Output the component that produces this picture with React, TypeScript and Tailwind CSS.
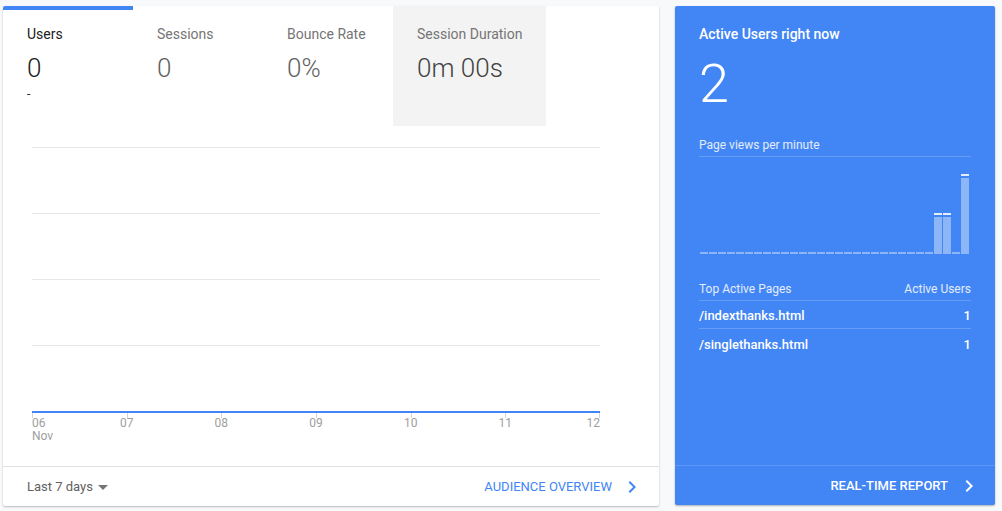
import React from "react";

const tabs = [
  { label: "Users", value: "0", sub: "-", active: true },
  { label: "Sessions", value: "0" },
  { label: "Bounce Rate", value: "0%" },
  { label: "Session Duration", value: "0m 00s", hover: true },
];

const days = ["06", "07", "08", "09", "10", "11", "12"];

// page views per minute, last 30 minutes
const pageViews = [
  0, 0, 0, 0, 0, 0, 0, 0, 0, 0, 0, 0, 0, 0, 0, 0, 0, 0, 0, 0, 0, 0, 0, 0, 0, 0, 1, 1, 0, 2,
];

const activePages = [
  { path: "/indexthanks.html", users: 1 },
  { path: "/singlethanks.html", users: 1 },
];

function ChevronRight({ className }: { className?: string }) {
  return (
    <svg viewBox="0 0 24 24" width="24" height="24" className={className} fill="currentColor">
      <path d="M10 6L8.59 7.41 13.17 12l-4.58 4.59L10 18l6-6z" />
    </svg>
  );
}

function CaretDown() {
  return (
    <svg viewBox="0 0 24 24" width="24" height="24" className="text-[#757575]" fill="currentColor">
      <path d="M7 10l5 5 5-5z" />
    </svg>
  );
}

function OverviewCard() {
  return (
    <div className="w-[656px] h-[500px] bg-white rounded-[2px] shadow-[0_1px_2px_rgba(0,0,0,0.25)] flex flex-col">
      <div className="flex h-[120px] shrink-0">
        {tabs.map((t) => (
          <div
            key={t.label}
            className={`relative min-w-[130px] px-6 pt-[18px] ${t.hover ? "bg-[#f3f3f3]" : ""}`}
          >
            {t.active && <div className="absolute top-0 left-0 right-0 h-1 bg-[#4285f4] rounded-tl-[2px]" />}
            <div className={`text-sm leading-5 whitespace-nowrap ${t.active ? "text-[#212121]" : "text-[#757575]"}`}>
              {t.label}
            </div>
            <div
              className={`mt-[11px] text-[26px] font-light leading-none whitespace-nowrap ${
                t.active ? "text-[#212121]" : t.hover ? "text-[#424242]" : "text-[#616161]"
              }`}
            >
              {t.value}
            </div>
            {t.sub && <div className="mt-[5px] text-xs leading-4 text-[#212121]">{t.sub}</div>}
          </div>
        ))}
      </div>

      <div className="flex-1 px-[29px] pt-[21px]">
        <div className="w-[568px]">
          {[0, 1, 2, 3].map((i) => (
            <div key={i} className="h-[66px] border-t border-[#e6e6e6]" />
          ))}
          <div className="h-[2px] bg-[#4285f4]" />
          <div className="relative h-[40px] text-xs leading-[13px] text-[#9e9e9e]">
            {days.map((d, i) => {
              const x = (568 / 6) * i;
              const align = i === 0 ? "" : i === 6 ? "-translate-x-full" : "-translate-x-1/2";
              return (
                <React.Fragment key={d}>
                  <div className="absolute top-0 w-px h-[5px] bg-[#d6d6d6]" style={{ left: i === 6 ? x - 1 : x }} />
                  <div className={`absolute top-[4px] ${align}`} style={{ left: x }}>
                    <div>{d}</div>
                    {i === 0 && <div>Nov</div>}
                  </div>
                </React.Fragment>
              );
            })}
          </div>
        </div>
      </div>

      <div className="h-[40px] shrink-0 border-t border-[#e0e0e0] flex items-center justify-between pl-6 pr-[15px]">
        <div className="flex items-center text-[13px] text-[#616161]">
          Last 7 days
          <span className="ml-[-2px]">
            <CaretDown />
          </span>
        </div>
        <div className="flex items-center text-[13px] text-[#4285f4]">
          AUDIENCE OVERVIEW
          <ChevronRight className="ml-[8px]" />
        </div>
      </div>
    </div>
  );
}

function RealtimeCard() {
  return (
    <div className="w-[320px] h-[499px] bg-[#4285f4] rounded-[2px] shadow-[0_1px_2px_rgba(0,0,0,0.3)] flex flex-col text-white">
      <div className="px-6 pt-[18px]">
        <div className="text-sm font-medium leading-5">Active Users right now</div>
        <div className="mt-[13px] text-[54px] font-light leading-none">2</div>
        <div className="mt-[26px] pb-[3px] border-b border-white/20 text-xs leading-4 text-white/85">
          Page views per minute
        </div>

        <div className="h-[97px] flex items-end gap-px pl-px">
          {pageViews.map((v, i) =>
            v === 0 ? (
              <div key={i} className="w-[8px] h-[2px] bg-white/40" />
            ) : (
              <div key={i} className="w-[8px] flex flex-col">
                <div className="h-[2px] bg-white/85" />
                <div className="mt-[2px] bg-white/40" style={{ height: v * 39 - 2 }} />
              </div>
            )
          )}
        </div>

        <div className="mt-[27px] flex justify-between pb-[3px] border-b border-white/20 text-xs leading-4 text-white/85">
          <span>Top Active Pages</span>
          <span>Active Users</span>
        </div>
        {activePages.map((p, i) => (
          <div
            key={p.path}
            className={`h-[28px] pt-[3px] flex items-center justify-between text-[13px] font-medium ${
              i < activePages.length - 1 ? "border-b border-white/20" : ""
            }`}
          >
            <span>{p.path}</span>
            <span>{p.users}</span>
          </div>
        ))}
      </div>

      <div className="mt-auto h-[40px] border-t border-white/15 flex items-center justify-end pr-[14px]">
        <span className="text-[13px] font-medium">REAL-TIME REPORT</span>
        <ChevronRight className="ml-[9px]" />
      </div>
    </div>
  );
}

export default function App() {
  return (
    <div className="w-full h-[511px] bg-[#f8f9fa] font-['Roboto',sans-serif] flex items-start gap-4 pl-[3px] pt-[6px]">
      <OverviewCard />
      <RealtimeCard />
    </div>
  );
}
